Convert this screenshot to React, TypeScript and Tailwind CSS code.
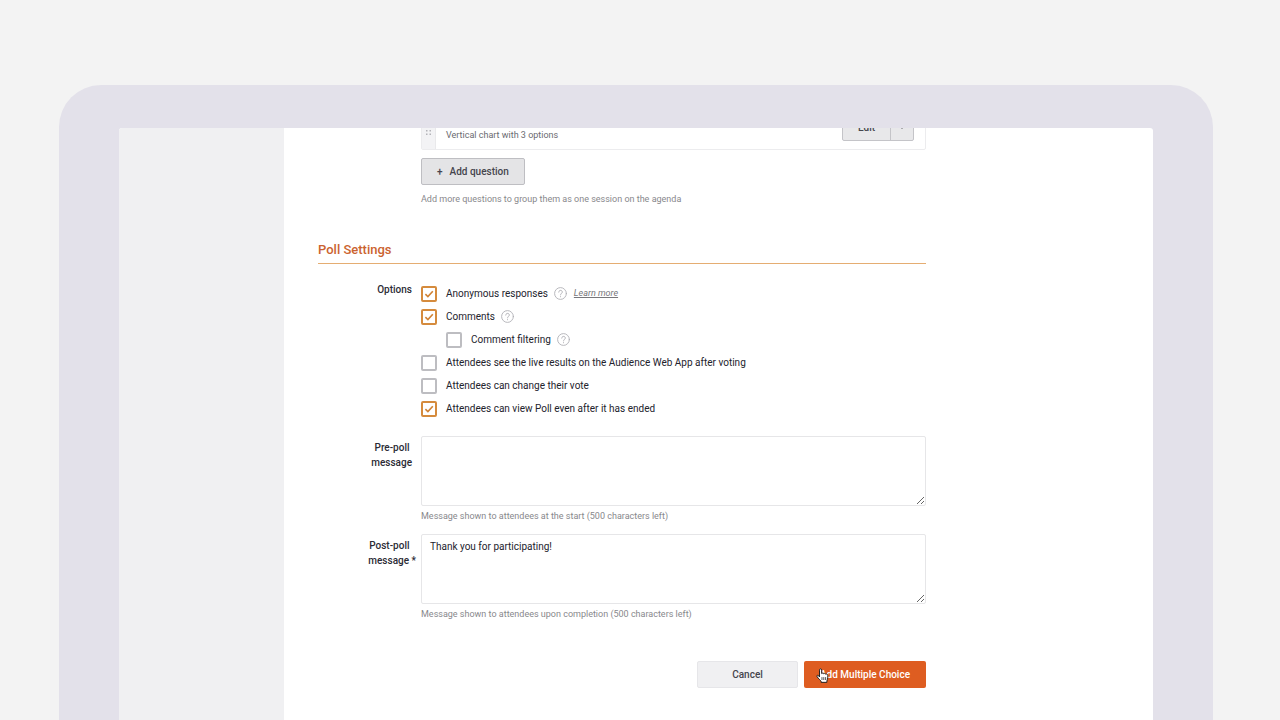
import { useState } from "react";
import type { ReactNode } from "react";

function HelpButton({ topic }: { topic: string }) {
  return (
    <button type="button" aria-label={`Help: ${topic}`} className="ml-1.5 shrink-0">
      <svg viewBox="0 0 13 13" className="size-[13px] fill-none stroke-[#b0b0b5]" strokeLinecap="round">
        <circle cx="6.500" cy="6.500" r="5.900" strokeWidth="0.9" />
        <path d="M4.700 5.100C4.700 2.700 8.300 2.800 8.300 5c0 1.400-1.800 1.500-1.800 2.900M6.500 9.600v.2" strokeWidth="0.95" />
      </svg>
    </button>
  );
}

type OptionProps = {
  id: string;
  label: string;
  checked?: boolean;
  help?: boolean;
  nested?: boolean;
  children?: ReactNode;
};

function Option({ id, label, checked = false, help, nested, children }: OptionProps) {
  return (
    <div className={nested ? "ml-[25px] flex h-[23px] items-center" : "flex h-[23px] items-center"}>
      <span className="grid shrink-0 place-items-center">
        <input
          id={id}
          type="checkbox"
          defaultChecked={checked}
          className="peer col-start-1 row-start-1 size-4 appearance-none rounded-[2px] border-2 border-[#bdbdc1] bg-white checked:border-[#d58b3d]"
        />
        <svg
          viewBox="0 0 16 16"
          className="pointer-events-none invisible col-start-1 row-start-1 size-4 fill-none stroke-[#d08234] peer-checked:visible"
          strokeWidth="1.6"
        >
          <path d="M4.4 8.2 6.9 10.6 11.8 5.2" />
        </svg>
      </span>
      <label htmlFor={id} className="ml-[9px] whitespace-nowrap text-[#23232d]">
        {label}
      </label>
      {help && <HelpButton topic={label} />}
      {children}
    </div>
  );
}

type MessageProps = {
  id: string;
  prefix: string;
  required?: boolean;
  initial?: string;
  hint: string;
};

function MessageField({ id, prefix, required, initial = "", hint }: MessageProps) {
  const [value, setValue] = useState(initial);
  return (
    <div className="flex">
      <label
        htmlFor={id}
        className="w-[94px] shrink-0 pt-1 text-right leading-[15px] font-medium text-[#2b2b35]"
      >
        {prefix}&nbsp;
        <br />
        message
        {required && <span className="-mr-1"> *</span>}
      </label>
      <div className="ml-[9px] min-w-0 flex-1">
        <textarea
          id={id}
          value={value}
          onChange={(event) => setValue(event.target.value)}
          className="block h-[70px] w-full rounded-[2px] border border-[#e6e6e8] bg-white px-2 py-1 leading-[15px] text-[#23232d] outline-none"
        />
        <p className="mt-[3px] text-[9px] leading-[15px] text-[#88888c]">{hint}</p>
      </div>
    </div>
  );
}

function QuestionCard() {
  return (
    <div className="-mt-6 flex h-[46px] rounded-[2px] border border-[#ececee] bg-white">
      <div className="flex w-3.5 shrink-0 items-end justify-center border-r border-[#e9e9eb] bg-[#f3f3f5] pb-3.5">
        <svg viewBox="0 0 5 5" className="size-[5px] fill-[#b3b3b8]">
          <path d="M0 0h1.500v1.500H0zM3.500 0H5v1.500H3.500zM0 3.500h1.500V5H0zM3.500 3.500H5V5H3.500z" />
        </svg>
      </div>
      <div className="flex flex-1 items-end justify-between pr-[11px] pb-1.5 pl-2.5">
        <p className="text-[9px] leading-[15px] text-[#6a6a70]">Vertical chart with 3 options</p>
        <div className="mb-0.5 flex h-7 rounded-[2px] border border-[#c4c4c8] bg-[#e8e8ea] text-[#45454d]">
          <button type="button" className="w-[47px] font-medium">
            Edit
          </button>
          <button
            type="button"
            aria-label="More actions"
            className="flex w-[23px] items-center justify-center border-l border-[#c4c4c8]"
          >
            <svg viewBox="0 0 6 4" className="h-1 w-1.5 fill-current">
              <path d="M0 0h6L3 4z" />
            </svg>
          </button>
        </div>
      </div>
    </div>
  );
}

function HandCursor() {
  return (
    <svg
      viewBox="0 0 12 14"
      className="pointer-events-none absolute top-[7px] left-3 h-[15px] w-[13px]"
      aria-hidden="true"
    >
      <path
        d="M3.2 8.4V2c0-1.7 2-1.7 2 0v3.2c.5-.6 1.6-.5 1.9.2.6-.6 1.6-.4 1.8.4.9-.5 2 0 2 1v2.4c0 1.300-.8 2-.8 3v1.200H4.700v-1C4 11.400 2.200 9.900 1 8.200.2 7 1.600 6.200 2.400 7.200z"
        fill="white"
        stroke="#1d1d1d"
        strokeWidth="0.9"
        strokeLinejoin="round"
      />
      <path d="M5.500 8.500v2.700M7.200 8.500v2.700M8.900 8.500v2.700" stroke="#1d1d1d" strokeWidth="0.7" fill="none" />
    </svg>
  );
}

export default function App() {
  return (
    <div className="flex h-screen flex-col overflow-hidden bg-[#f3f3f3] pt-[85px] pr-[67px] pl-[59px] font-['Roboto',sans-serif] text-[10px] text-[#2b2b35]">
      <div className="flex min-h-0 flex-1 rounded-t-[42px] bg-[#e3e1ea] px-[60px] pt-[43px]">
        <div className="flex min-w-0 flex-1 overflow-hidden rounded-t-[3px] bg-white">
          <aside className="w-[165px] shrink-0 bg-[#f0f0f2]" />
          <main className="min-w-0 flex-1 px-[34px]">
            <form className="max-w-[608px]" onSubmit={(event) => event.preventDefault()}>
              <section className="ml-[103px]">
                <QuestionCard />
                <button
                  type="button"
                  className="mt-2 flex h-[27px] items-center gap-[7px] rounded-[2px] border border-[#bebec2] bg-[#e4e4e6] px-[15px] font-medium text-[#45454d]"
                >
                  <span>+</span>
                  <span>Add question</span>
                </button>
                <p className="mt-[7px] text-[9px] leading-[15px] text-[#88888c]">
                  Add more questions to group them as one session on the agenda
                </p>
              </section>

              <h2 className="mt-[33px] border-b border-[#e5ad72] pb-[3px] text-[13px] leading-5 font-medium text-[#cb6330]">
                Poll Settings
              </h2>

              <div role="group" aria-labelledby="options-label" className="mt-[18px] flex">
                <span id="options-label" className="w-[94px] shrink-0 text-right leading-[15px] font-medium">
                  Options
                </span>
                <div className="ml-[9px] min-w-0 flex-1">
                  <Option id="anonymous" label="Anonymous responses" checked help>
                    <a href="#anonymous" className="ml-[7px] text-[9px] text-[#77777b] italic underline">
                      Learn more
                    </a>
                  </Option>
                  <Option id="comments" label="Comments" checked help />
                  <Option id="filtering" label="Comment filtering" help nested />
                  <Option id="live" label="Attendees see the live results on the Audience Web App after voting" />
                  <Option id="change" label="Attendees can change their vote" />
                  <Option id="after" label="Attendees can view Poll even after it has ended" checked />
                </div>
              </div>

              <div className="mt-4 flex flex-col gap-2.5">
                <MessageField
                  id="pre-message"
                  prefix="Pre-poll"
                  hint="Message shown to attendees at the start (500 characters left)"
                />
                <MessageField
                  id="post-message"
                  prefix="Post-poll"
                  required
                  initial="Thank you for participating!"
                  hint="Message shown to attendees upon completion (500 characters left)"
                />
              </div>

              <div className="mt-[39px] flex justify-end gap-1.5 font-medium">
                <button
                  type="button"
                  className="h-[27px] w-[101px] rounded-[2px] border border-[#e6e6e9] bg-[#f0f0f2] text-[#45454d]"
                >
                  Cancel
                </button>
                <button
                  type="submit"
                  className="relative h-[27px] w-[122px] rounded-[2px] bg-[#de5d21] text-white"
                >
                  Add Multiple Choice
                  <HandCursor />
                </button>
              </div>
            </form>
          </main>
        </div>
      </div>
    </div>
  );
}
